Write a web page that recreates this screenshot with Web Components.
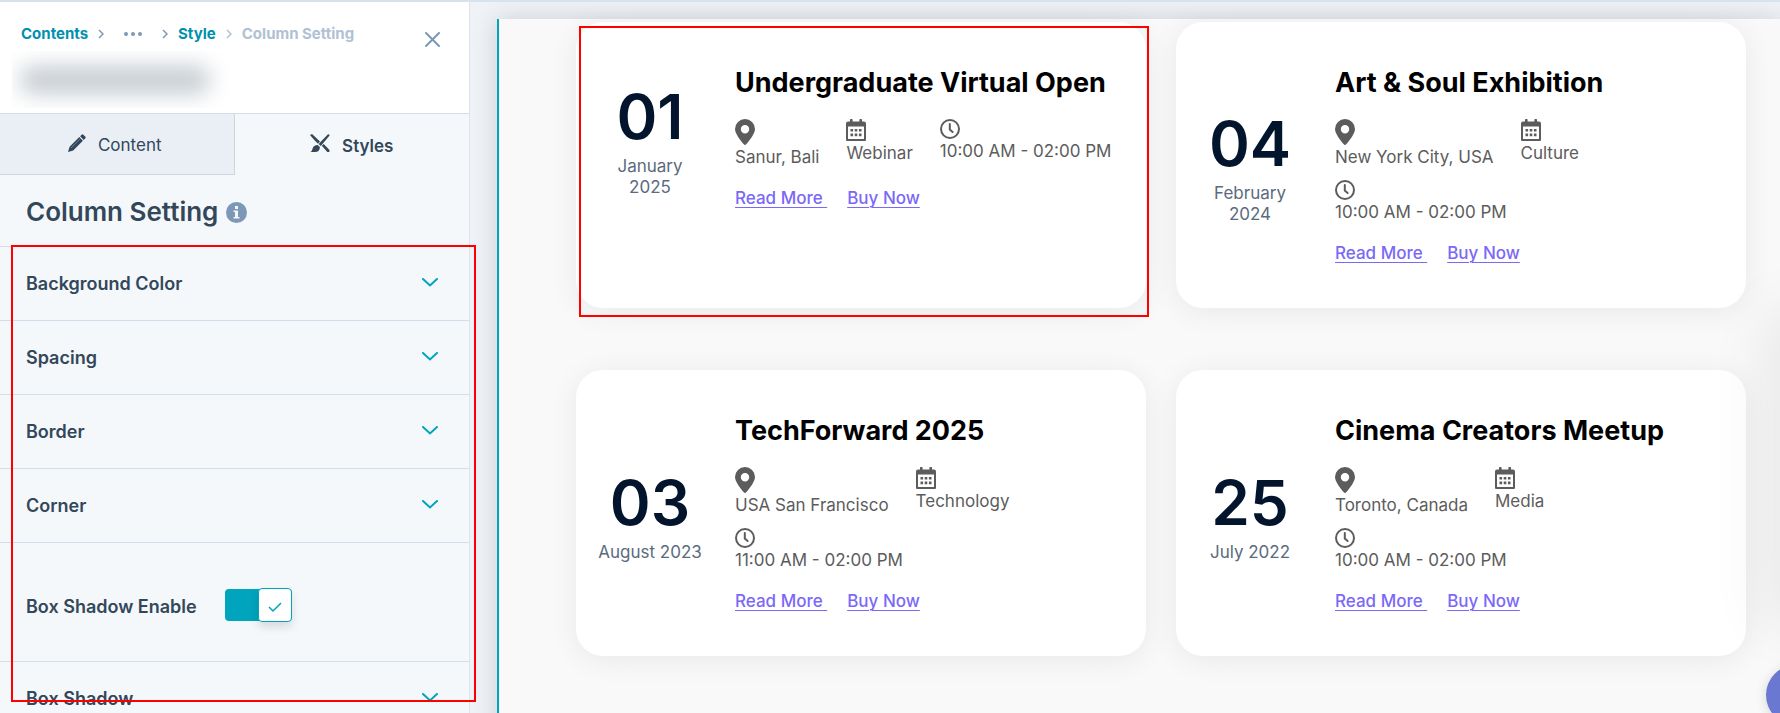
<!DOCTYPE html>
<html lang="en">

<head>
  <meta charset="UTF-8">
  <meta name="viewport" content="width=device-width, initial-scale=1.0">
  <title>Column Setting</title>
  <style>
    :root {
      --teal: #00a4bd;
      --ink: #33475b;
      --line: #d3deea;
      --mark: #ff0000;
    }

    body {
      margin: 0;
      height: 100vh;
      overflow: hidden;
      font-family: Inter, "Liberation Sans", sans-serif;
    }
  </style>
</head>

<body>
  <page-editor>
    <settings-panel slot="panel">
      <crumb-trail slot="head"></crumb-trail>
      <panel-tabs slot="tabs"></panel-tabs>
      <setting-row>Background Color</setting-row>
      <setting-row>Spacing</setting-row>
      <setting-row>Border</setting-row>
      <setting-row>Corner</setting-row>
      <toggle-row>Box Shadow Enable</toggle-row>
      <setting-row>Box Shadow</setting-row>
    </settings-panel>

    <event-card day="01" month="January 2025" place="Sanur, Bali" kind="Webinar" time="10:00 AM - 02:00 PM" marked>Undergraduate Virtual Open</event-card>
    <event-card day="04" month="February 2024" place="New York City, USA" kind="Culture" time="10:00 AM - 02:00 PM">Art &amp; Soul Exhibition</event-card>
    <event-card day="03" month="August 2023" place="USA San Francisco" kind="Technology" time="11:00 AM - 02:00 PM">TechForward 2025</event-card>
    <event-card day="25" month="July 2022" place="Toronto, Canada" kind="Media" time="10:00 AM - 02:00 PM">Cinema Creators Meetup</event-card>
  </page-editor>

  <template id="page-editor">
    <style>
      :host {
        display: grid;
        grid-template-columns: 470px 1fr;
        height: 100%;
        box-sizing: border-box;
        border-top: 2px solid #d8e2ec;
        background: #eff3f7;
        overflow: hidden;
        position: relative;
      }

      .stage {
        padding: 17px 0 0 27px;
        display: grid;
        overflow: hidden;
      }

      .canvas {
        border-left: 2px solid var(--teal);
        background: #f9f9f9;
        box-shadow: 0 0 24px rgba(0, 0, 0, .15);
        padding: 3px 34px 0 77px;
        display: grid;
        grid-template-columns: 1fr 1fr;
        gap: 62px 30px;
        align-content: start;
      }

      .chat {
        position: absolute;
        right: -46px;
        bottom: -12px;
        width: 60px;
        height: 60px;
        border: 0;
        border-radius: 30px;
        background: #6a78d1;
        box-shadow: 0 2px 12px rgba(0, 0, 0, .15);
      }

      .edge {
        position: absolute;
        right: -40px;
        top: 320px;
        width: 40px;
        height: 290px;
        box-shadow: 0 0 60px 12px rgba(0, 0, 0, .08);
      }
    </style>
    <slot name="panel"></slot>
    <div class="stage">
      <main class="canvas"><slot></slot></main>
    </div>
    <div class="edge"></div>
    <button class="chat" aria-label="Open chat"></button>
  </template>

  <template id="settings-panel">
    <style>
      :host {
        display: block;
        position: relative;
        z-index: 1;
        background: #f5f8fa;
        border-right: 1px solid #dfe3eb;
        color: var(--ink);
      }

      h2 {
        margin: 0;
        padding: 22px 26px 19px;
        display: flex;
        align-items: center;
        gap: 8px;
        font-size: 26px;
        line-height: 30px;
        font-weight: 600;
      }

      .list {
        position: relative;
      }

      .mark {
        position: absolute;
        top: -1px;
        left: 11px;
        right: -7px;
        height: 453px;
        border: 2px solid var(--mark);
        pointer-events: none;
      }
    </style>
    <slot name="head"></slot>
    <slot name="tabs"></slot>
    <h2>Column Setting
      <svg width="21" height="21" viewBox="0 0 21 21" aria-hidden="true">
        <circle cx="10.500" cy="10.500" r="10.500" fill="#7c98b6" />
        <path d="M9 4h3v3H9zM7.500 8.500H12v6.500h1.500v1.500h-6V15H9v-5H7.500z" fill="#f5f8fa" />
      </svg>
    </h2>
    <div class="list">
      <slot></slot>
      <div class="mark"></div>
    </div>
  </template>

  <template id="crumb-trail">
    <style>
      :host {
        display: block;
        height: 111px;
        background: #fff;
        border-bottom: 1px solid var(--line);
      }

      .top {
        display: flex;
        justify-content: space-between;
        padding: 20px 29px 0 21px;
      }

      nav {
        display: flex;
        align-items: center;
        gap: 10px;
        height: 24px;
        font-size: 15px;
        line-height: 20px;
        font-weight: 700;
        color: #b0c1d4;
      }

      a {
        color: #0091ae;
        text-decoration: none;
      }

      .more {
        margin: 0 9px;
      }

      button {
        margin: 10px 0 0;
        padding: 0;
        border: 0;
        background: none;
        width: 15px;
        height: 15px;
      }

      svg {
        display: block;
      }

      .name {
        margin: 4px 0 0 12px;
        padding: 15px 8px;
        width: 217px;
        height: 27px;
        overflow: hidden;
      }

      .name::before {
        content: "";
        display: block;
        width: 190px;
        height: 28px;
        border-radius: 12px;
        background: #c6ccd1;
        filter: blur(11px);
      }
    </style>
    <div class="top">
      <nav aria-label="Breadcrumb">
        <a href="#">Contents</a>
        <svg width="6" height="10" viewBox="0 0 6 10"><path d="M1 1l4 4-4 4" fill="none" stroke="#7c98b6" stroke-width="1.500" /></svg>
        <svg class="more" width="20" height="4" viewBox="0 0 20 4" fill="#7c98b6"><circle cx="3" cy="2" r="2" /><circle cx="10" cy="2" r="2" /><circle cx="17" cy="2" r="2" /></svg>
        <svg width="6" height="10" viewBox="0 0 6 10"><path d="M1 1l4 4-4 4" fill="none" stroke="#7c98b6" stroke-width="1.500" /></svg>
        <a href="#">Style</a>
        <svg width="6" height="10" viewBox="0 0 6 10"><path d="M1 1l4 4-4 4" fill="none" stroke="#b0c1d4" stroke-width="1.500" /></svg>
        <span>Column Setting</span>
      </nav>
      <button aria-label="Close">
        <svg width="15" height="15" viewBox="0 0 15 15"><path d="M1 1l13 13M14 1L1 14" stroke="#7c98b6" stroke-width="2" stroke-linecap="round" /></svg>
      </button>
    </div>
    <div class="name"></div>
  </template>

  <template id="panel-tabs">
    <style>
      :host {
        display: grid;
        grid-template-columns: 1fr 1fr;
        height: 61px;
      }

      button {
        display: flex;
        align-items: center;
        justify-content: center;
        gap: 12px;
        margin: 0;
        padding: 2px 4px 0 0;
        border: 0;
        background: none;
        font: 400 17px/20px Inter, sans-serif;
        color: var(--ink);
      }

      .off {
        background: #eaeff6;
        border: solid #cbd6e2;
        border-width: 0 1px 1px 0;
      }

      .on {
        padding-right: 0;
        font-weight: 600;
      }

      svg {
        margin-bottom: 4px;
      }
    </style>
    <button class="off">
      <svg width="18" height="18" viewBox="0 0 18 18" fill="#33475b"><path d="M0 18l1.600-5.200L11.300 3.100l3.600 3.600-9.700 9.700zM12.100 2.300L13.600.8q.9-.9 1.800 0l1.800 1.800q.9.900 0 1.800l-1.500 1.500z" /><path d="M3 14L12.500 4.500" stroke="#8496a8" stroke-width=".7" /></svg>
      Content
    </button>
    <button class="on">
      <svg width="20" height="19" viewBox="0 0 20 19" fill="#33475b"><path d="M0 1l2-1 8 7.500-2 2.300Q4 6 0 1zM11.800 11.800l1.900-1.900 5.800 6-.2 2.100-2 .1z" /><path d="M18 .2q1.500 0 1.600 1.300L10.800 12 8.600 10zM7.700 10.900l2.200 2q0 5-5 5H.4q1.800-1 2.200-3.500.9-3.500 5.100-3.500z" /></svg>
      Styles
    </button>
  </template>

  <template id="setting-row">
    <style>
      :host {
        display: block;
        border-top: 1px solid var(--line);
      }

      button {
        display: flex;
        align-items: center;
        justify-content: space-between;
        width: 100%;
        margin: 0;
        padding: 26px 31px 25px 26px;
        border: 0;
        background: none;
        font: 600 18px/22px Inter, sans-serif;
        color: inherit;
      }

      svg {
        margin-bottom: 3px;
      }
    </style>
    <button>
      <span><slot></slot></span>
      <svg width="16" height="9" viewBox="0 0 16 9"><path d="M1 1l7 6.500L15 1" fill="none" stroke="#00a4bd" stroke-width="2" stroke-linecap="round" /></svg>
    </button>
  </template>

  <template id="toggle-row">
    <style>
      :host {
        display: block;
        border-top: 1px solid var(--line);
      }

      label {
        display: flex;
        align-items: center;
        gap: 28px;
        padding: 46px 26px 36px;
        font-size: 18px;
        line-height: 36px;
        font-weight: 600;
      }

      input {
        appearance: none;
        box-sizing: border-box;
        margin: 0 0 4px;
        width: 67px;
        height: 32px;
        border-radius: 4px;
        background: #00a4bd;
        display: flex;
        align-items: center;
        justify-content: flex-end;
      }

      input::before {
        content: "";
        box-sizing: border-box;
        width: 34px;
        height: 34px;
        border: 1px solid #00a4bd;
        border-radius: 4px;
        background: #fff url('data:image/svg+xml,<svg xmlns="http://www.w3.org/2000/svg" width="14" height="11"><path d="M1 5l4 4 8-8" fill="none" stroke="%2300a4bd" stroke-width="1.500"/></svg>') center 13px / 14px 11px no-repeat;
        box-shadow: 0 5px 10px rgba(0, 0, 0, .12);
        flex: none;
      }
    </style>
    <label><span><slot></slot></span><input type="checkbox" role="switch" checked></label>
  </template>

  <template id="event-card">
    <style>
      :host {
        display: grid;
        grid-template-columns: 108px 1fr;
        column-gap: 31px;
        align-content: start;
        align-items: center;
        position: relative;
        padding: 44px 20px;
        border-radius: 27px;
        background: #fff;
        box-shadow: 0 4px 30px rgba(0, 0, 0, .07);
        font-size: 17px;
        line-height: 21px;
        color: #5c5c5c;
      }

      .date {
        text-align: center;
        color: #5b6b7e;
      }

      .day {
        font-size: 62px;
        line-height: 78px;
        font-weight: 600;
        color: #03142d;
      }

      h3 {
        margin: 0 0 19px;
        font-size: 27px;
        line-height: 34px;
        font-weight: 700;
        color: #000;
      }

      ul {
        display: flex;
        flex-wrap: wrap;
        align-items: flex-start;
        gap: 12px 27px;
        margin: 0 0 20px;
        padding: 0;
        list-style: none;
      }

      svg {
        display: block;
        margin-bottom: 2px;
      }

      .links {
        display: flex;
        gap: 20px;
      }

      a {
        color: #7b68f7;
        font-weight: 500;
        text-underline-offset: 3px;
        text-decoration-thickness: 1px;
      }

      .mark {
        display: none;
        position: absolute;
        inset: 4px -3px -9px 3px;
        border: 2px solid var(--mark);
        pointer-events: none;
      }

      :host([marked]) .mark {
        display: block;
      }
    </style>
    <div class="date">
      <div class="day"></div>
      <div class="month"></div>
    </div>
    <div>
      <h3><slot></slot></h3>
      <ul>
        <li>
          <svg width="20" height="26" viewBox="0 0 20 26"><path fill-rule="evenodd" fill="#5c5c5c" d="M10 0a10 10 0 0 1 10 10c0 4-4.500 10.500-9.100 15.600q-.9.900-1.800 0C4.500 20.500 0 14 0 10A10 10 0 0 1 10 0zm0 6a4.200 4.200 0 1 0 0 8.400A4.200 4.200 0 0 0 10 6z" /></svg>
          <span class="place"></span>
        </li>
        <li>
          <svg width="20" height="22" viewBox="0 0 20 22" fill="#5c5c5c"><path fill-rule="evenodd" d="M4 1a1.200 1.200 0 0 1 2.600 0v1.500h6.800V1A1.200 1.200 0 0 1 16 1v1.500h2q2 0 2 2V21q0 1-1 1H1q-1 0-1-1V4.500q0-2 2-2h2zM2 7.500V20h16V7.500z" /><path d="M4.500 10h2.600v2.600H4.500zM8.700 10h2.600v2.600H8.700zM12.900 10h2.600v2.600h-2.600zM4.500 14.600h2.600v2.600H4.500zM8.700 14.600h2.600v2.600H8.700zM12.900 14.600h2.600v2.600h-2.600z" /></svg>
          <span class="kind"></span>
        </li>
        <li>
          <svg width="20" height="20" viewBox="0 0 20 20" fill="none" stroke="#5c5c5c" stroke-width="2" stroke-linecap="round"><circle cx="10" cy="10" r="9" /><path d="M9.800 5v5.500l2.800 2.500" /></svg>
          <span class="time"></span>
        </li>
      </ul>
      <div class="links"><a href="#">Read More&nbsp;</a><a href="#">Buy Now</a></div>
    </div>
    <div class="mark"></div>
  </template>

  <script>
    // every element clones the template that carries its own tag name
    class TemplateElement extends HTMLElement {
      constructor() {
        super();
        const shadow = this.attachShadow({ mode: 'open' });
        const tmpl = document.getElementById(this.localName);
        shadow.appendChild(tmpl.content.cloneNode(true));
      }
    }

    class EventCard extends TemplateElement {
      connectedCallback() {
        ['day', 'month', 'place', 'kind', 'time'].forEach(name => {
          this.shadowRoot.querySelector('.' + name).textContent = this.getAttribute(name);
        });
      }
    }

    window.customElements.define('page-editor', class extends TemplateElement {});
    window.customElements.define('settings-panel', class extends TemplateElement {});
    window.customElements.define('crumb-trail', class extends TemplateElement {});
    window.customElements.define('panel-tabs', class extends TemplateElement {});
    window.customElements.define('setting-row', class extends TemplateElement {});
    window.customElements.define('toggle-row', class extends TemplateElement {});
    window.customElements.define('event-card', EventCard);
  </script>
</body>

</html>
